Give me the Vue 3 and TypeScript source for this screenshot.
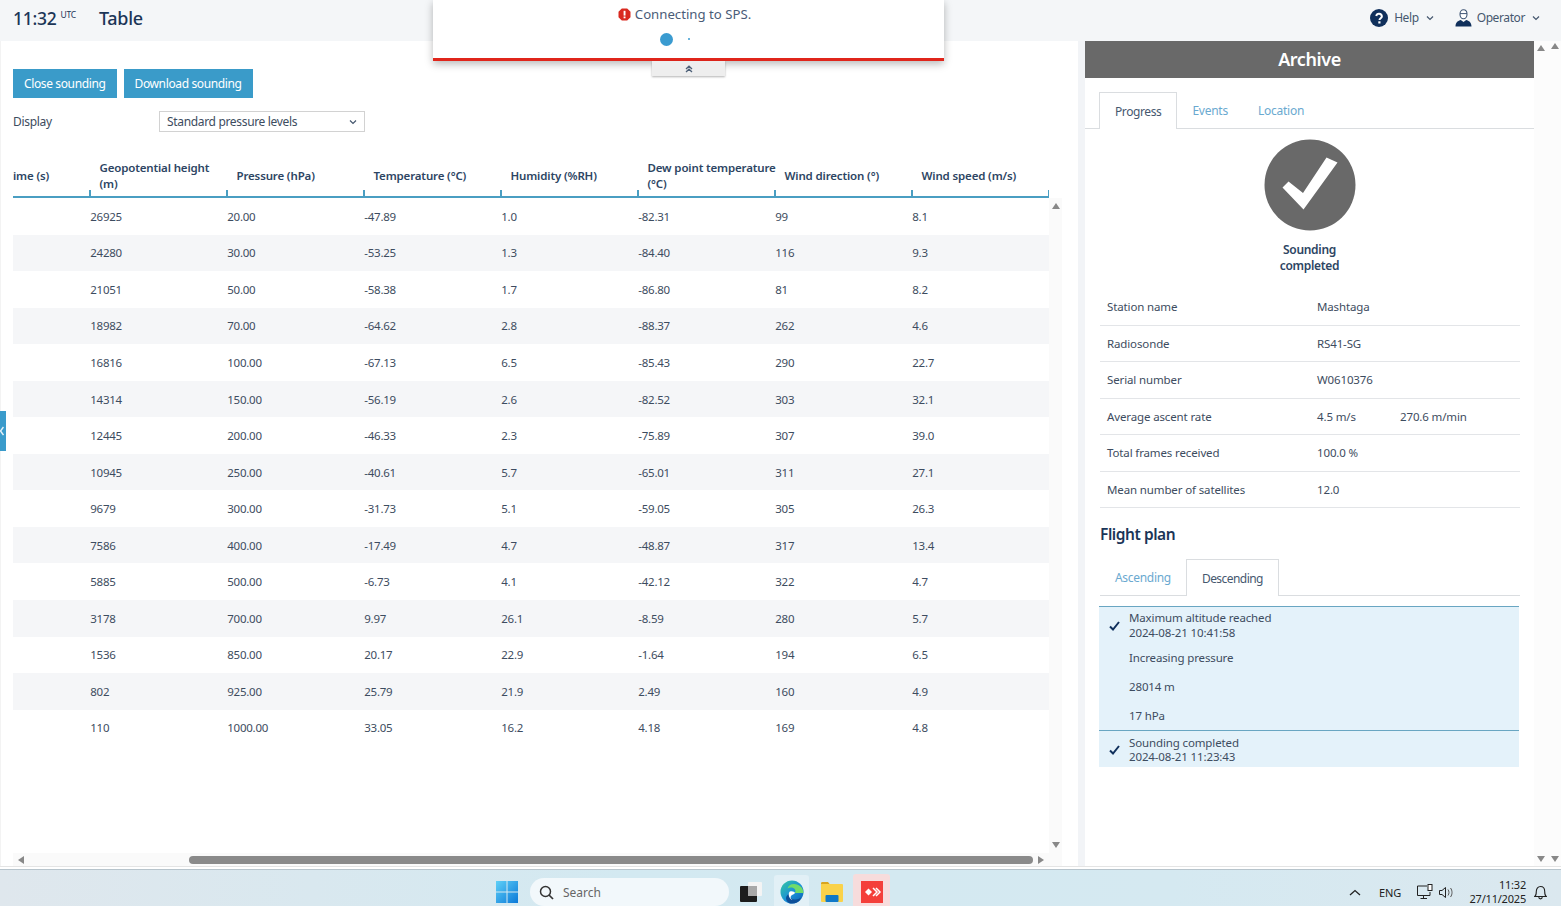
<script setup lang="ts">
const columns: string[] = ['ime (s)', 'Geopotential height\n(m)', 'Pressure (hPa)', 'Temperature (°C)', 'Humidity (%RH)', 'Dew point temperature\n(°C)', 'Wind direction (°)', 'Wind speed (m/s)']
const rows: string[][] = [
  ['26925', '20.00', '-47.89', '1.0', '-82.31', '99', '8.1'],
  ['24280', '30.00', '-53.25', '1.3', '-84.40', '116', '9.3'],
  ['21051', '50.00', '-58.38', '1.7', '-86.80', '81', '8.2'],
  ['18982', '70.00', '-64.62', '2.8', '-88.37', '262', '4.6'],
  ['16816', '100.00', '-67.13', '6.5', '-85.43', '290', '22.7'],
  ['14314', '150.00', '-56.19', '2.6', '-82.52', '303', '32.1'],
  ['12445', '200.00', '-46.33', '2.3', '-75.89', '307', '39.0'],
  ['10945', '250.00', '-40.61', '5.7', '-65.01', '311', '27.1'],
  ['9679', '300.00', '-31.73', '5.1', '-59.05', '305', '26.3'],
  ['7586', '400.00', '-17.49', '4.7', '-48.87', '317', '13.4'],
  ['5885', '500.00', '-6.73', '4.1', '-42.12', '322', '4.7'],
  ['3178', '700.00', '9.97', '26.1', '-8.59', '280', '5.7'],
  ['1536', '850.00', '20.17', '22.9', '-1.64', '194', '6.5'],
  ['802', '925.00', '25.79', '21.9', '2.49', '160', '4.9'],
  ['110', '1000.00', '33.05', '16.2', '4.18', '169', '4.8'],
]
const info: { label: string; value: string; extra?: string }[] = [
  { label: 'Station name', value: 'Mashtaga' },
  { label: 'Radiosonde', value: 'RS41-SG' },
  { label: 'Serial number', value: 'W0610376' },
  { label: 'Average ascent rate', value: '4.5 m/s', extra: '270.6 m/min' },
  { label: 'Total frames received', value: '100.0 %' },
  { label: 'Mean number of satellites', value: '12.0' },
]
</script>

<template>
  <div class="app">
    <header class="topbar">
      <span class="clock">11:32</span><span class="utc">UTC</span>
      <h1 class="page-title">Table</h1>
      <div class="top-actions">
        <svg class="help-icon" width="18" height="18" viewBox="0 0 18 18">
          <circle cx="9" cy="9" r="9" fill="#10305c" />
          <path d="M6.2 7a2.9 2.9 0 0 1 5.7.3c0 1.9-2.4 1.9-2.4 3.7" fill="none" stroke="#fff" stroke-width="2" />
          <rect x="8.3" y="12.3" width="2.2" height="2.2" fill="#fff" />
        </svg>
        <span class="top-link">Help</span>
        <svg class="chev" width="8" height="6" viewBox="0 0 8 6"><path d="M1 1.5l3 3 3-3" fill="none" stroke="#44566e" stroke-width="1.2" /></svg>
        <svg class="op-icon" width="17" height="18" viewBox="0 0 17 18">
          <path d="M5 5.2c0-2.6 1.5-4.4 3.5-4.4S12 2.600 12 5.200c0 2.400-1.500 4.600-3.500 4.600S5 7.600 5 5.200z" fill="#fff" stroke="#3f5675" stroke-width="1.100" />
          <path d="M5 4.600h7" stroke="#3f5675" stroke-width="1" />
          <path d="M.5 17.500c0-4.200 2.800-5.800 5.300-6.400l2.700 2 2.700-2c2.500.6 5.300 2.200 5.300 6.400z" fill="#10305c" />
        </svg>
        <span class="top-link">Operator</span>
        <svg class="chev last" width="8" height="6" viewBox="0 0 8 6"><path d="M1 1.5l3 3 3-3" fill="none" stroke="#44566e" stroke-width="1.2" /></svg>
      </div>
    </header>

    <div class="popup">
      <div class="popup-msg">
        <svg width="13" height="13" viewBox="0 0 13 13">
          <path d="M3.800.5h5.400l3.300 3.300v5.400l-3.300 3.300H3.800L.5 9.200V3.800z" fill="#d9291f" />
          <rect x="5.600" y="2.800" width="1.900" height="4.800" fill="#fff" />
          <rect x="5.600" y="8.500" width="1.900" height="1.800" fill="#fff" />
        </svg>
        <span>Connecting to SPS.</span>
      </div>
      <div class="dots"><i class="dot big"></i><i class="dot small"></i></div>
      <div class="popup-handle">
        <svg width="8" height="8" viewBox="0 0 8 8"><path d="M1 4l3-2.800L7 4M1 7l3-2.800L7 7" fill="none" stroke="#4d6078" stroke-width="1.300" /></svg>
      </div>
    </div>
    <div class="side-tab">
      <svg width="4" height="10" viewBox="0 0 4 10"><path d="M3.500 1L.5 5l3 4" fill="none" stroke="#e4f1f8" stroke-width="1.500" /></svg>
    </div>

    <main class="main">
      <section class="left">
        <div class="buttons">
          <button class="btn" type="button">Close sounding</button>
          <button class="btn" type="button">Download sounding</button>
        </div>
        <div class="display-row">
          <span class="display-label">Display</span>
          <div class="select">
            <span>Standard pressure levels</span>
            <svg width="8" height="6" viewBox="0 0 8 6"><path d="M1 1.500l3 3 3-3" fill="none" stroke="#44566e" stroke-width="1.200" /></svg>
          </div>
        </div>
        <div class="table-wrap">
          <div class="table">
            <div class="thead">
              <div v-for="(c, i) in columns" :key="c" class="th" :class="{ first: i === 0 }"><span>{{ c }}</span></div>
            </div>
            <div v-for="(r, i) in rows" :key="r[0]" class="tr" :class="{ alt: i % 2 === 1 }">
              <div class="td-lead"></div>
              <div v-for="(v, j) in r" :key="j" class="td">{{ v }}</div>
            </div>
          </div>
          <div class="vbar">
            <i class="tri up"></i>
            <i class="tri down"></i>
          </div>
        </div>
        <div class="hbar">
          <i class="tri left-tri"></i>
          <div class="hthumb"></div>
          <i class="tri right-tri"></i>
        </div>
      </section>

      <div class="gutter"></div>

      <aside class="right">
        <div class="archive-title">Archive</div>
        <nav class="tabs top-tabs">
          <span class="tab active">Progress</span>
          <span class="tab">Events</span>
          <span class="tab">Location</span>
        </nav>
        <div class="status">
          <svg width="92" height="92" viewBox="0 0 92 92">
            <circle cx="46" cy="46" r="45.500" fill="#696969" />
            <path d="M18.500 48.500l6-6L39 54 62.500 18.500l11 5-34 47z" fill="#fff" />
          </svg>
          <div class="status-text">Sounding<br />completed</div>
        </div>
        <div class="info">
          <div v-for="row in info" :key="row.label" class="info-row">
            <span class="info-label">{{ row.label }}</span>
            <span class="info-value">{{ row.value }}</span>
            <span v-if="row.extra">{{ row.extra }}</span>
          </div>
        </div>
        <h2 class="plan-title">Flight plan</h2>
        <nav class="tabs plan-tabs">
          <span class="tab">Ascending</span>
          <span class="tab active">Descending</span>
        </nav>
        <div class="plan">
          <div class="plan-item">
            <svg class="check" width="11" height="10" viewBox="0 0 11 10"><path d="M1 5.500l3 3L10 1" fill="none" stroke="#10305c" stroke-width="2" /></svg>
            <div class="plan-lines">Maximum altitude reached<br />2024-08-21 10:41:58</div>
          </div>
          <div class="plan-sub">Increasing pressure</div>
          <div class="plan-sub">28014 m</div>
          <div class="plan-sub">17 hPa</div>
          <div class="plan-item second">
            <svg class="check" width="11" height="10" viewBox="0 0 11 10"><path d="M1 5.500l3 3L10 1" fill="none" stroke="#10305c" stroke-width="2" /></svg>
            <div class="plan-lines">Sounding completed<br />2024-08-21 11:23:43</div>
          </div>
        </div>
      </aside>

      <div class="rscroll">
        <div class="rs-top"><i class="tri up"></i><i class="tri up raised"></i></div>
        <div class="rs-bottom"><i class="tri down"></i><i class="tri down"></i></div>
      </div>
    </main>

    <div class="edge"></div>

    <footer class="taskbar">
      <svg class="win" width="22" height="22" viewBox="0 0 22 22">
        <defs>
          <linearGradient id="wg" x1="0" y1="0" x2="1" y2="1">
            <stop offset="0" stop-color="#5fd0f7" />
            <stop offset="1" stop-color="#0a78d8" />
          </linearGradient>
        </defs>
        <path d="M0 0h10.500v10.500H0zM11.500 0H22v10.500H11.500zM0 11.500h10.500V22H0zM11.500 11.500H22V22H11.500z" fill="url(#wg)" />
      </svg>
      <div class="search">
        <svg width="15" height="15" viewBox="0 0 15 15"><circle cx="6.500" cy="6.500" r="5" fill="none" stroke="#333" stroke-width="1.500" /><path d="M10 10l4 4" stroke="#333" stroke-width="1.700" /></svg>
        <span>Search</span>
      </div>
      <svg class="taskview" width="22" height="20" viewBox="0 0 22 20">
        <rect x="8" y="0" width="14" height="14" rx="1" fill="#f4f4f4" />
        <rect x="0" y="4" width="17" height="16" rx="1" fill="#1c1c1c" />
        <rect x="8" y="4" width="9" height="10" fill="#a8a8a8" />
      </svg>
      <div class="tile edge-tile">
        <svg width="24" height="24" viewBox="0 0 24 24">
          <defs>
            <linearGradient id="eg" x1="0" y1="0" x2="1" y2="1">
              <stop offset="0" stop-color="#36c8a0" />
              <stop offset=".55" stop-color="#1a8fd8" />
              <stop offset="1" stop-color="#0d5fae" />
            </linearGradient>
          </defs>
          <circle cx="12" cy="12" r="11.500" fill="url(#eg)" />
          <path d="M23.500 13.500c0-6-4.500-9.500-9.500-9.500-3.500 0-6 2-6.500 4.500 2-1.500 6-1.500 7.500 1 .8 1.300.5 2.700-.5 3.500h8.500z" fill="#6fdc6a" />
          <path d="M9 14c0 3.500 3 5.500 6.500 5.500 2 0 4-.8 5.500-2-1 3-4 6-9 6-1 0-2-.2-3-.6C5 20.500 5 16 9 14z" fill="#0c4f99" />
          <path d="M10 11.500c2-.8 4.500 0 5 1.500h-5c-1.500 0-1.500-1 0-1.500z" fill="#fff" />
          <path d="M9 13h6c-.5 1.200-3 1.500-4 3-1 1.500 0 3 1.500 4-2.500-.5-4.500-4.500-3.500-7z" fill="#fff" />
        </svg>
      </div>
      <svg class="folder" width="22" height="22" viewBox="0 0 22 22">
        <path d="M0 2.500c0-.8.500-1.500 1.300-1.500H7l2 2.500H0z" fill="#d9a520" />
        <rect x="0" y="3" width="22" height="18" rx="1" fill="#fad24a" />
        <rect x="4.500" y="14" width="13" height="7" rx="1" fill="#0f78c8" />
      </svg>
      <div class="tile red-tile">
        <svg width="22" height="22" viewBox="0 0 22 22">
          <rect width="22" height="22" fill="#f43f3a" />
          <path d="M4 11l3.500-3.500L11 11l-3.500 3.500z" fill="#fff" />
          <path d="M12 7l4 4-4 4M15 7l4 4-4 4" fill="none" stroke="#fff" stroke-width="1.500" />
        </svg>
      </div>
      <div class="tray">
        <svg class="tray-up" width="12" height="7" viewBox="0 0 12 7"><path d="M1 6l5-4.500L11 6" fill="none" stroke="#222" stroke-width="1.300" /></svg>
        <span class="lang">ENG</span>
        <svg class="net" width="16" height="16" viewBox="0 0 16 16">
          <path d="M10 2H.5v9.500H13V8M6.500 11.500V14M3.500 14.500h6.500" fill="none" stroke="#222" stroke-width="1" />
          <rect x="11" y=".5" width="4" height="6" fill="#fff" stroke="#222" />
        </svg>
        <svg class="vol" width="15" height="13" viewBox="0 0 15 13">
          <path d="M.5 4.500h2.500L6.500 1.500v10L3 8.500H.5z" fill="none" stroke="#222" />
          <path d="M9 3.500c1.300 1.800 1.300 4.200 0 6M11.500 2c2 2.500 2 6.500 0 9" fill="none" stroke="#555" />
        </svg>
        <div class="datetime"><span>11:32</span><span>27/11/2025</span></div>
        <svg class="bell" width="13" height="15" viewBox="0 0 13 15">
          <path d="M.8 11.500c1.500-1 1.500-3 1.500-5 0-3 1.800-5 4.200-5s4.200 2 4.200 5c0 2 0 4 1.500 5zM4.800 12c0 2.500 3.400 2.500 3.400 0" fill="none" stroke="#222" stroke-width="1.100" />
        </svg>
      </div>
    </footer>
  </div>
</template>

<style scoped>
.app {
  position: relative;
  width: 1561px;
  height: 906px;
  overflow: hidden;
  display: flex;
  flex-direction: column;
  background: #fff;
  font-family: "Noto Sans", "Open Sans", sans-serif;
  font-size: 11.5px;
  letter-spacing: -0.25px;
  color: #3d4c60;
}
.topbar {
  height: 41px;
  flex: none;
  box-sizing: border-box;
  display: flex;
  align-items: center;
  padding: 0 0 6px 13px;
  background: #f4f6f8;
  color: #1b3557;
}
.clock { font-size: 17.5px; font-weight: 500; }
.utc { font-size: 8.5px; align-self: flex-start; margin: 9px 0 0 4px; }
.page-title { margin: 0 0 0 23px; font-size: 18px; font-weight: 500; letter-spacing: -0.3px; }
.top-actions { margin-left: auto; display: flex; align-items: center; color: #46586f; font-size: 12px; }
.help-icon { margin-right: 6px; }
.top-link { letter-spacing: -0.4px; }
.chev { margin-left: 7px; }
.op-icon { margin: 0 5px 0 21px; }
.chev.last { margin-right: 21px; }

.popup {
  position: absolute;
  left: 433px;
  top: 0;
  z-index: 5;
  width: 511px;
  height: 61px;
  box-sizing: border-box;
  background: #fff;
  border-bottom: 3px solid #e0251b;
  box-shadow: 0 3px 8px rgba(0, 0, 0, .28);
  text-align: center;
}
.popup-msg {
  display: flex;
  justify-content: center;
  align-items: center;
  gap: 4px;
  height: 28px;
  padding-right: 8px;
  font-size: 13.2px;
  letter-spacing: 0;
  color: #4a5c78;
}
.dots { display: flex; justify-content: center; align-items: center; gap: 15px; height: 22px; padding-right: 28px; }
.dot { display: block; border-radius: 50%; background: #3a9bd0; }
.dot.big { width: 13px; height: 13px; }
.dot.small { width: 2px; height: 2px; }
.popup-handle {
  position: absolute;
  left: 219px;
  top: 61px;
  width: 73px;
  height: 15px;
  display: flex;
  align-items: center;
  justify-content: center;
  background: #eeeeee;
  box-shadow: 0 1px 2px rgba(0, 0, 0, .3);
}
.side-tab {
  position: absolute;
  left: 0;
  top: 411px;
  z-index: 3;
  width: 6px;
  height: 40px;
  background: #3a9bcb;
  display: flex;
  align-items: center;
}

.main { flex: 1; min-height: 0; display: flex; }
.left {
  width: 1078px;
  flex: none;
  box-sizing: border-box;
  padding: 28px 0 0 12px;
  border-left: 1px solid #f3f3f3;
  display: flex;
  flex-direction: column;
}
.buttons { display: flex; gap: 7px; }
.btn {
  height: 29px;
  padding: 0 11px;
  border: 0;
  background: #3a9bc9;
  color: #fff;
  font: inherit;
  font-size: 12px;
  letter-spacing: -0.37px;
}
.display-row { display: flex; align-items: center; margin-top: 13px; height: 21px; }
.display-label { width: 146px; font-size: 12px; letter-spacing: -0.3px; }
.select {
  width: 206px;
  height: 21px;
  box-sizing: border-box;
  border: 1px solid #d2d2d2;
  display: flex;
  align-items: center;
  justify-content: space-between;
  padding: 0 7px;
  font-size: 12px;
  letter-spacing: -0.33px;
}
.table-wrap { flex: 1; min-height: 0; display: flex; margin-top: 26px; }
.table { width: 1036px; flex: none; }
.thead {
  display: grid;
  grid-template-columns: 77px repeat(7, 137px);
  height: 40px;
  box-sizing: border-box;
  border-bottom: 2.500px solid #4a9ec2;
  color: #2d4563;
  font-weight: 600;
}
.th {
  position: relative;
  display: flex;
  align-items: center;
  padding: 0 0 0 9.500px;
  box-sizing: border-box;
  line-height: 16px;
  letter-spacing: -0.15px;
  white-space: pre;
}
.th.first { padding-left: 0; }
.th:not(.first)::after {
  content: "";
  position: absolute;
  left: -1px;
  bottom: 0;
  width: 1.500px;
  height: 6px;
  background: #4a9ec2;
}
.th:last-child::before {
  content: "";
  position: absolute;
  right: 0;
  bottom: 0;
  width: 1.500px;
  height: 6px;
  background: #4a9ec2;
}
.th span { display: block; position: relative; top: -1px; }
.tr {
  display: grid;
  grid-template-columns: 77px repeat(7, 137px);
  height: 36.550px;
  align-items: center;
}
.tr.alt { background: #f5f6f8; }
.td { padding-left: 0.300px; }
.vbar { width: 13px; margin: 40px 0 0 0; background: #fafafa; position: relative; }
.tri { display: block; width: 0; height: 0; border-style: solid; border-color: transparent; }
.tri.up { border-width: 0 4px 6px; border-bottom-color: #888; }
.tri.down { border-width: 6px 4px 0; border-top-color: #888; }
.vbar .up { position: absolute; left: 3px; top: 5px; }
.vbar .down { position: absolute; left: 3px; bottom: 5px; }
.hbar {
  height: 13px;
  flex: none;
  margin-right: 16px;
  background: #fafafa;
  display: flex;
  align-items: center;
}
.left-tri { border-width: 4px 6px 4px 0; border-right-color: #888; margin-left: 5px; }
.right-tri { border-width: 4px 0 4px 6px; border-left-color: #888; margin-left: 5px; }
.hthumb { width: 844px; height: 8px; margin-left: 165px; border-radius: 4px; background: #8a8a8a; }

.gutter { width: 7px; flex: none; background: #f2f4f7; }
.right { width: 449px; flex: none; }
.archive-title {
  height: 37px;
  line-height: 37px;
  background: #696969;
  color: #fff;
  font-size: 18px;
  font-weight: 600;
  letter-spacing: -0.4px;
  text-align: center;
}
.tabs { display: flex; height: 37px; box-sizing: border-box; border-bottom: 1px solid #dadde0; font-size: 12px; letter-spacing: -0.25px; }
.top-tabs { margin-top: 14px; padding-left: 14px; }
.tab {
  box-sizing: border-box;
  height: 37px;
  padding: 0 15px;
  display: flex;
  align-items: center;
  color: #6aa9d0;
}
.tab.active {
  background: #fff;
  color: #46586f;
  border: 1px solid #dadde0;
  border-bottom: 0;
  letter-spacing: -0.4px;
}
.status { display: flex; flex-direction: column; align-items: center; margin-top: 10px; }
.status-text {
  margin-top: 11px;
  font-size: 12px;
  font-weight: 600;
  line-height: 16px;
  letter-spacing: -0.3px;
  text-align: center;
  color: #2d4563;
}
.info { margin: 15px 14px 0 15px; letter-spacing: -0.13px; }
.info-row {
  height: 36.550px;
  box-sizing: border-box;
  border-bottom: 1px solid #e3e5e8;
  display: flex;
  align-items: center;
  padding-left: 7px;
}
.info-label { width: 210px; }
.info-value { width: 83px; }
.plan-title {
  margin: 15px 0 0 15px;
  font-size: 15.500px;
  line-height: 22px;
  font-weight: 600;
  letter-spacing: -0.45px;
  color: #1b3557;
}
.plan-tabs { margin: 14px 14px 0 15px; }
.plan-tabs .tab { letter-spacing: -0.3px; }
.plan-tabs .tab.active { letter-spacing: -0.55px; }
.plan {
  margin: 10px 15px 0 14px;
  height: 161px;
  background: #e4f2fa;
  border-top: 1.500px solid #69a6c2;
  box-sizing: border-box;
  color: #3d4c60;
  letter-spacing: -0.13px;
}
.plan-item {
  position: relative;
  display: flex;
  align-items: center;
  height: 36px;
  padding: 1px 0 0 10px;
  box-sizing: border-box;
}
.plan-item.second {
  height: 36.500px;
  padding: 2px 0 0 10px;
  border-top: 1.500px solid #69a6c2;
}
.check { flex: none; margin-right: 9px; }
.plan-lines { line-height: 14.300px; }
.plan-sub { height: 29px; line-height: 29px; padding-left: 30px; }
.rscroll {
  flex: 1;
  display: flex;
  flex-direction: column;
  justify-content: space-between;
  padding: 4px 2px 4px 3px;
  background: #fcfcfc;
}
.rs-top, .rs-bottom { display: flex; justify-content: space-between; }
.rs-top .raised { margin-top: -2px; }
.edge {
  height: 4px;
  flex: none;
  background: #fff;
  border-top: 1px solid #e4e4e4;
  border-bottom: 1px solid #b7c4cc;
  box-sizing: border-box;
}
.taskbar {
  height: 36px;
  flex: none;
  box-sizing: border-box;
  overflow: hidden;
  display: flex;
  align-items: center;
  padding: 8px 0 0 496px;
  background: linear-gradient(90deg, #dfe7ed 0%, #d3e9f1 40%, #d5e9f1 75%, #dbe8ef 100%);
  color: #222;
}
.win, .taskview, .folder, .search, .tile { flex: none; }
.search {
  width: 199px;
  height: 28px;
  margin-left: 12px;
  display: flex;
  align-items: center;
  gap: 9px;
  padding-left: 9px;
  box-sizing: border-box;
  border-radius: 14px;
  background: #f2f8fb;
  color: #666;
  font-size: 12px;
  letter-spacing: 0;
}
.taskview { margin-left: 11px; }
.tile { display: flex; align-items: center; justify-content: center; }
.edge-tile { width: 35px; height: 34px; margin-left: 12px; background: #e2f0f6; border-radius: 3px; }
.folder { margin-left: 12px; }
.red-tile { width: 37px; height: 36px; margin-left: 10px; background: #f7dcdc; border-radius: 3px; }
.tray { margin-left: auto; display: flex; align-items: center; }
.tray-up { margin-right: 18px; }
.lang { font-size: 11px; letter-spacing: -0.2px; margin-right: 16px; }
.vol { margin-left: 6px; }
.datetime {
  display: flex;
  flex-direction: column;
  align-items: flex-end;
  width: 60px;
  margin-left: 12px;
  font-size: 11px;
  line-height: 14px;
  letter-spacing: -0.2px;
}
.bell { margin: 0 14px 0 8px; }
</style>
